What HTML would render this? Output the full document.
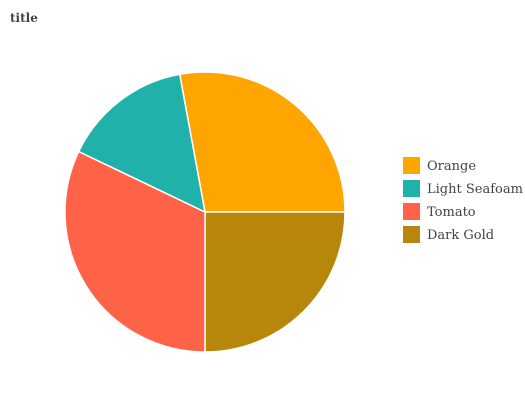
<html><body style="margin:0;width:525px;height:400px;background:#fff;overflow:hidden">
<svg width="525" height="400" style="position:absolute;left:0;top:0">
<text x="10" y="22" font-family="DejaVu Serif, serif" font-size="12" font-weight="bold" fill="#444">title</text>
<g stroke="#fff" stroke-width="1.5">
<path d="M205,212 L179.7,74.3 A140,140 0 0 1 345,212 Z" fill="#FFA500"/>
<path d="M205,212 L345,212 A140,140 0 0 1 205,352 Z" fill="#B8860B"/>
<path d="M205,212 L205,352 A140,140 0 0 1 78.7,151.5 Z" fill="#FF6347"/>
<path d="M205,212 L78.7,151.5 A140,140 0 0 1 179.7,74.3 Z" fill="#20B2AA"/>
</g>
<g font-family="DejaVu Serif, serif" font-size="13" fill="#444">
<rect x="403" y="157" width="17" height="17" fill="#FFA500"/><text x="427" y="170">Orange</text>
<rect x="403" y="180" width="17" height="17" fill="#20B2AA"/><text x="427" y="193">Light Seafoam</text>
<rect x="403" y="203" width="17" height="17" fill="#FF6347"/><text x="427" y="216">Tomato</text>
<rect x="403" y="226" width="17" height="17" fill="#B8860B"/><text x="427" y="239">Dark Gold</text>
</g>
</svg>
</body></html>
